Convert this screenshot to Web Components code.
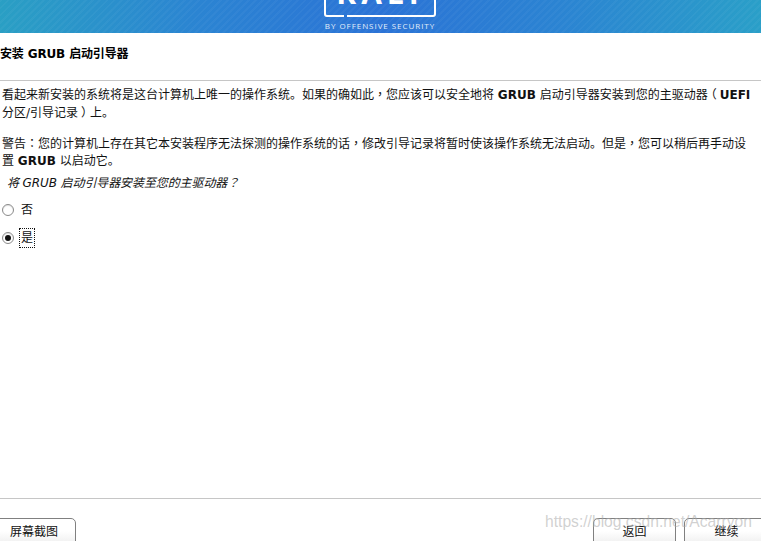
<!DOCTYPE html>
<html lang="zh-CN">
<head>
<meta charset="utf-8">
<title>安装 GRUB 启动引导器</title>
<style>
    html, body { margin: 0; height: 100%; overflow: hidden; background: #fff; }
    body { font: 12px/18px "DejaVu Sans", "Noto Sans CJK SC", sans-serif; color: #111; }
    /* the installer's font centres its full-width punctuation */
    .pn { font-family: "Noto Sans CJK TC", sans-serif; line-height: 0; }
    .open { margin: 0 3px 0 -3px; }
    .close { margin: 0 -3px 0 3px; }
</style>
</head>
<body>
<installer-page>
    <kali-banner></kali-banner>
    <page-title>安装 GRUB 启动引导器</page-title>
    <info-text>
        <p>看起来新安装的系统将是这台计算机上唯一的操作系统。如果的确如此<span class="pn" lang="zh-TW">，</span>您应该可以安全地将 <b>GRUB</b> 启动引导器安装到您的主驱动器<span class="pn open" lang="zh-TW">（</span><b>UEFI</b><br>分区/引导记录<span class="pn close" lang="zh-TW">）</span>上。</p>
        <p>警告<span class="pn" lang="zh-TW">：</span>您的计算机上存在其它本安装程序无法探测的操作系统的话<span class="pn" lang="zh-TW">，</span>修改引导记录将暂时使该操作系统无法启动。但是<span class="pn" lang="zh-TW">，</span>您可以稍后再手动设<br>置 <b>GRUB</b> 以启动它。</p>
    </info-text>
    <choice-list>
        <span slot="question">将 GRUB 启动引导器安装至您的主驱动器<span class="pn" lang="zh-TW">？</span></span>
        <radio-row>否</radio-row>
        <radio-row checked>是</radio-row>
    </choice-list>
    <button-bar>
        <push-button slot="left" style="margin-left:-8px;width:84px">屏幕截图</push-button>
        <push-button>返回</push-button>
        <push-button style="margin-right:-8px;width:85px">继续</push-button>
    </button-bar>
</installer-page>

<script>
// --- helpers ---
function define(name, css, html) {
    customElements.define(name, class extends HTMLElement {
        constructor() {
            super();
            this.attachShadow({ mode: 'open' }).innerHTML = `<style>${css}</style>${html}`;
        }
    });
}

// --- components ---
define('installer-page', `
    :host { display: flex; flex-direction: column; height: 541px; overflow: hidden; position: relative; }
    .mark {
        position: absolute; left: 545px; top: 512px;
        font: 15.65px/20px "Liberation Sans", sans-serif;
        color: rgba(170,170,170,.55); white-space: nowrap; pointer-events: none;
    }
`, `<slot></slot><div class="mark">https://blog.csdn.net/Acarryon</div>`);

define('kali-banner', `
    :host {
        display: block; height: 33px; flex: none; position: relative; overflow: hidden;
        background:
            repeating-linear-gradient(135deg, rgba(255,255,255,.035) 0 2px, transparent 2px 5px),
            linear-gradient(90deg, #2a9fc4 0, #2b84d2 26%, #2b73d6 50%, #2b84d2 74%, #2a9fc8 100%);
    }
    .box {
        position: absolute; left: 324px; top: -20px; width: 108px; height: 33px;
        border: 2px solid #fff; border-radius: 3px;
    }
    .gap { position: absolute; left: 344px; top: 13px; width: 3px; height: 5px; background: #2b76d5; }
    .name {
        position: absolute; left: 324px; width: 112px; top: -22px; text-align: center;
        font: 700 30px/30px "Open Sans", sans-serif; letter-spacing: 5px; color: #fff;
    }
    .by {
        position: absolute; left: 320px; width: 120px; top: 20px; text-align: center;
        font: 8px/11px "Open Sans", sans-serif; letter-spacing: .95px; color: #e3eefa; white-space: nowrap;
    }
`, `<div class="box"></div><div class="gap"></div><div class="name">KALI</div><div class="by">BY OFFENSIVE SECURITY</div>`);

define('page-title', `
    :host {
        display: block; flex: none; height: 48px; box-sizing: border-box; padding: 12px 0 0 0;
        border-bottom: 1px solid #c6c6c6; font-size: 12px; font-weight: bold; line-height: 18px; color: #000;
        letter-spacing: -.15px;
    }
`, `<slot></slot>`);

define('info-text', `
    :host { display: block; flex: none; padding: 6px 0 0 2px; white-space: nowrap; line-height: 17.5px; }
    ::slotted(p) { margin: 0 0 13.5px; }
`, `<slot></slot>`);

define('choice-list', `
    :host { display: block; flex: 1; }
    .q { margin: -10px 0 0 7px; font-style: italic; line-height: 18px; letter-spacing: -.1px; }
    .rows { display: flex; flex-direction: column; gap: 6px; margin-top: 7px; padding-left: 2px; }
`, `<div class="q"><slot name="question"></slot></div><div class="rows"><slot></slot></div>`);

define('radio-row', `
    :host { display: flex; align-items: center; height: 22px; }
    .dot {
        width: 10px; height: 10px; border: 1px solid #8a8a8a; border-radius: 50%; background: #fff;
        position: relative; flex: none; box-shadow: inset 0 1px 1px rgba(0,0,0,.12);
    }
    :host([checked]) .dot::after {
        content: ""; position: absolute; left: 2px; top: 2px; width: 6px; height: 6px;
        border-radius: 50%; background: #111;
    }
    .label { margin-left: 5px; padding: 0 1px; border: 1px dotted transparent; line-height: 18px; }
    :host([checked]) .label { border-color: #111; }
`, `<span class="dot"></span><span class="label"><slot></slot></span>`);

define('button-bar', `
    :host {
        display: flex; flex: none; height: 43px; box-sizing: border-box; padding-top: 19px;
        border-top: 1px solid #c6c6c6; gap: 8px; justify-content: flex-end;
    }
    .left { margin-right: auto; display: flex; }
`, `<div class="left"><slot name="left"></slot></div><slot></slot>`);

define('push-button', `
    :host {
        display: block; box-sizing: border-box; width: 83px; height: 30px;
        border: 1px solid #808080; border-radius: 5px 5px 0 0;
        background: linear-gradient(#fff 0 12px, #f0f0f0 24px);
        text-align: center; line-height: 27px; color: #111;
    }
`, `<slot></slot>`);
</script>
</body>
</html>
